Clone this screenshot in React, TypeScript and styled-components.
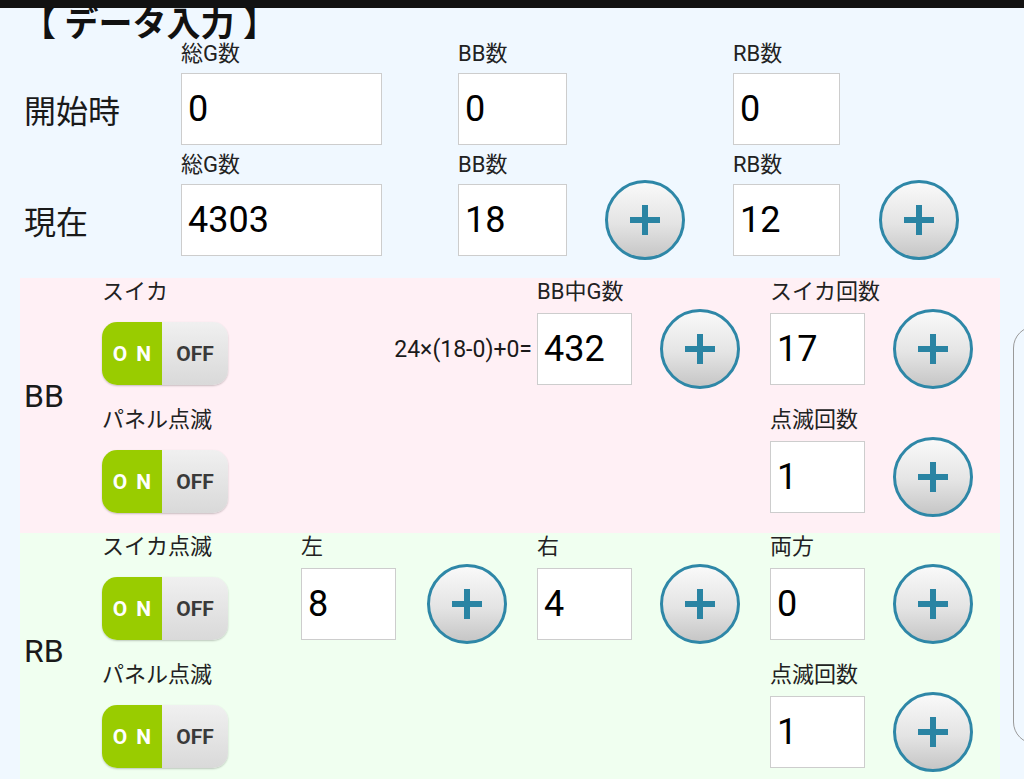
import React from "react";
import styled, { createGlobalStyle } from "styled-components";

const GlobalStyle = createGlobalStyle`
  html, body {
    margin: 0;
    padding: 0;
  }
  body {
    background: #f0f8ff;
    font-family: Roboto, "Noto Sans CJK JP", sans-serif;
    color: #1a1a1a;
  }
`;

const Screen = styled.div`
  width: 1024px;
  height: 779px;
  overflow: hidden;
  background: #f0f8ff;
`;

const StatusBar = styled.div`
  height: 8px;
  background: #121212;
`;

const Body = styled.div`
  display: flex;
  align-items: flex-start;
`;

const Main = styled.div`
  width: 1000px;
  flex-shrink: 0;
`;

const SidePanel = styled.div`
  flex-shrink: 0;
  margin: 318px 0 0 13px;
  width: 140px;
  height: 418px;
  box-sizing: border-box;
  border: 1.5px solid #9a9a9a;
  border-radius: 22px;
`;

const Title = styled.h1`
  margin: 0;
  padding-left: 22px;
  height: 33px;
  font-size: 34px;
  line-height: 33px;
  font-weight: 700;
  color: #111;
  white-space: nowrap;
`;

const StartGrid = styled.div`
  display: grid;
  grid-template-columns: 181px 277px 275px 1fr;
  row-gap: 7px;
  margin-bottom: 22px;
`;

const RowLabel = styled.div`
  padding: 32px 0 0 24px;
  height: 72px;
  display: flex;
  align-items: center;
  font-size: 32px;
  color: #1a1a1a;
`;

const Field = styled.div<{ $gap: number; $col?: number; $row?: number }>`
  display: flex;
  flex-direction: column;
  align-items: flex-start;
  gap: ${(p) => p.$gap}px;
  ${(p) => (p.$col ? `grid-column: ${p.$col};` : "")}
  ${(p) => (p.$row ? `grid-row: ${p.$row};` : "")}
`;

const FieldLabel = styled.div`
  font-size: 22px;
  line-height: 26px;
  color: #222;
  white-space: nowrap;
`;

const Controls = styled.div<{ $gap: number }>`
  display: flex;
  align-items: center;
  gap: ${(p) => p.$gap}px;
  height: 72px;
`;

const ValueBox = styled.div<{ $w: number }>`
  width: ${(p) => p.$w}px;
  height: 72px;
  box-sizing: border-box;
  padding-left: 6px;
  display: flex;
  align-items: center;
  background: #fff;
  border: 1px solid #cdcdcd;
  font-size: 36px;
  color: #000;
`;

const PlusButton = styled.button`
  width: 80px;
  height: 80px;
  margin: -4px 0;
  padding: 0;
  box-sizing: border-box;
  flex-shrink: 0;
  display: flex;
  align-items: center;
  justify-content: center;
  border: 3px solid #2e87a7;
  border-radius: 50%;
  background: linear-gradient(180deg, #f9f9f9 0%, #e4e4e4 55%, #c6c6c6 100%);
  cursor: pointer;
`;

const Section = styled.div<{ $tone: string }>`
  margin-left: 20px;
  width: 980px;
  box-sizing: border-box;
  padding: 1px 0 20px;
  background: ${(p) => p.$tone};
  display: grid;
  grid-template-columns: 82px 199px 236px 233px 1fr;
  grid-template-rows: 106px 106px;
  row-gap: 22px;
`;

const SectionLabel = styled.div`
  grid-column: 1;
  grid-row: 1 / span 2;
  align-self: center;
  padding-left: 4px;
  font-size: 32px;
  color: #1a1a1a;
`;

const Formula = styled.div`
  grid-column: 3;
  grid-row: 1;
  align-self: end;
  height: 72px;
  display: flex;
  align-items: center;
  justify-content: flex-end;
  padding-right: 5px;
  font-size: 23px;
  color: #1a1a1a;
  white-space: nowrap;
`;

const Switch = styled.div`
  margin-top: 9px;
  width: 126px;
  height: 66px;
  border-radius: 15px;
  overflow: hidden;
  display: flex;
  box-shadow: 0 1px 2px rgba(0, 0, 0, 0.22);
`;

const SwitchOn = styled.span`
  width: 60px;
  box-sizing: border-box;
  padding-left: 9px;
  display: flex;
  align-items: center;
  justify-content: center;
  background: #99cc00;
  color: #fff;
  font-size: 21px;
  font-weight: 700;
  letter-spacing: 9px;
`;

const SwitchOff = styled.span`
  flex: 1;
  display: flex;
  align-items: center;
  justify-content: center;
  background: linear-gradient(180deg, #f0f0f0 0%, #d9d9d9 100%);
  color: #3a3a3a;
  font-size: 21px;
  font-weight: 700;
`;

function Plus() {
  return (
    <PlusButton type="button">
      <svg width="30" height="30" viewBox="0 0 30 30">
        <rect x="0" y="12" width="30" height="6" fill="#2a84a3" />
        <rect x="12" y="0" width="6" height="30" fill="#2a84a3" />
      </svg>
    </PlusButton>
  );
}

function Toggle({ label, row }: { label: string; row: number }) {
  return (
    <Field $gap={8} $col={2} $row={row}>
      <FieldLabel>{label}</FieldLabel>
      <Switch>
        <SwitchOn>ON</SwitchOn>
        <SwitchOff>OFF</SwitchOff>
      </Switch>
    </Field>
  );
}

type NumProps = {
  label: string;
  value: string;
  w: number;
  gap: number;
  button?: boolean;
  fieldGap: number;
  col?: number;
  row?: number;
};

function NumberField({ label, value, w, gap, button, fieldGap, col, row }: NumProps) {
  return (
    <Field $gap={fieldGap} $col={col} $row={row}>
      <FieldLabel>{label}</FieldLabel>
      <Controls $gap={gap}>
        <ValueBox $w={w}>{value}</ValueBox>
        {button && <Plus />}
      </Controls>
    </Field>
  );
}

const startRows = [
  { label: "開始時", g: "0", bb: "0", rb: "0", button: false },
  { label: "現在", g: "4303", bb: "18", rb: "12", button: true },
];

export default function App() {
  return (
    <Screen>
      <GlobalStyle />
      <StatusBar />
      <Body>
        <Main>
          <Title>【 データ入力 】</Title>
          <StartGrid>
            {startRows.map((r) => (
              <React.Fragment key={r.label}>
                <RowLabel>{r.label}</RowLabel>
                <NumberField label="総G数" value={r.g} w={201} gap={0} fieldGap={6} />
                <NumberField label="BB数" value={r.bb} w={109} gap={38} button={r.button} fieldGap={6} />
                <NumberField label="RB数" value={r.rb} w={107} gap={39} button={r.button} fieldGap={6} />
              </React.Fragment>
            ))}
          </StartGrid>

          <Section $tone="#fff0f5">
            <SectionLabel>BB</SectionLabel>
            <Toggle label="スイカ" row={1} />
            <Formula>24×(18-0)+0=</Formula>
            <NumberField label="BB中G数" value="432" w={95} gap={28} button fieldGap={8} col={4} row={1} />
            <NumberField label="スイカ回数" value="17" w={95} gap={28} button fieldGap={8} col={5} row={1} />
            <Toggle label="パネル点滅" row={2} />
            <NumberField label="点滅回数" value="1" w={95} gap={28} button fieldGap={8} col={5} row={2} />
          </Section>

          <Section $tone="#f0fff0">
            <SectionLabel>RB</SectionLabel>
            <Toggle label="スイカ点滅" row={1} />
            <NumberField label="左" value="8" w={95} gap={31} button fieldGap={8} col={3} row={1} />
            <NumberField label="右" value="4" w={95} gap={28} button fieldGap={8} col={4} row={1} />
            <NumberField label="両方" value="0" w={95} gap={28} button fieldGap={8} col={5} row={1} />
            <Toggle label="パネル点滅" row={2} />
            <NumberField label="点滅回数" value="1" w={95} gap={28} button fieldGap={8} col={5} row={2} />
          </Section>
        </Main>
        <SidePanel />
      </Body>
    </Screen>
  );
}
